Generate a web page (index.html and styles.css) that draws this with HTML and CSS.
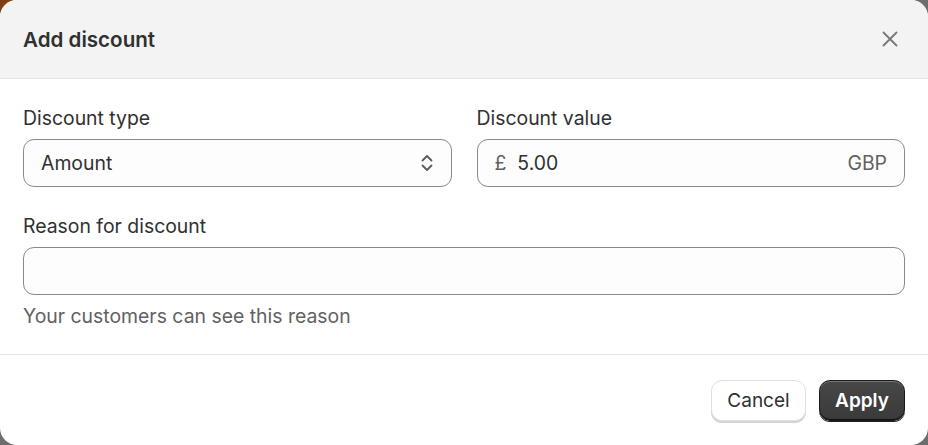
FILE: index.html
```html
<!DOCTYPE html>
<html lang="en">
<head>
<meta charset="utf-8">
<title>Add discount</title>
<link rel="stylesheet" href="styles.css">
</head>
<body>
<div class="modal">
  <div class="modal-header">
    <h2 class="modal-title">Add discount</h2>
    <button class="close-btn" aria-label="Close">
      <svg width="20" height="20" viewBox="0 0 20 20"><path d="M3.5 3.5 L16.5 16.5 M16.5 3.5 L3.5 16.5" stroke="#777" stroke-width="1.8" stroke-linecap="round" fill="none"/></svg>
    </button>
  </div>
  <div class="modal-body">
    <div class="row">
      <div class="field">
        <label class="label">Discount type</label>
        <div class="input select">
          <span class="value">Amount</span>
          <svg class="chev" width="16" height="24" viewBox="0 0 16 24"><path d="M3.5 9.5 L8 5 L12.5 9.5 M3.5 14.5 L8 19 L12.5 14.5" stroke="#5a5a5a" stroke-width="1.8" fill="none" stroke-linecap="round" stroke-linejoin="round"/></svg>
        </div>
      </div>
      <div class="field">
        <label class="label">Discount value</label>
        <div class="input">
          <span class="prefix">£</span>
          <span class="value grow">5.00</span>
          <span class="suffix">GBP</span>
        </div>
      </div>
    </div>
    <div class="field">
      <label class="label">Reason for discount</label>
      <div class="input"></div>
      <p class="help">Your customers can see this reason</p>
    </div>
  </div>
  <div class="modal-footer">
    <button class="btn btn-secondary">Cancel</button>
    <button class="btn btn-primary">Apply</button>
  </div>
</div>
</body>
</html>
```
FILE: styles.css
```css
* { box-sizing: border-box; }
html, body { margin: 0; height: 100%; }
body {
  background: linear-gradient(135deg, #7a3d12 0, #8a4a1c 2%, #6d6d6d 4%, #6d6d6d 100%);
  font-family: Inter, "Noto Sans", sans-serif;
  color: #303030;
}
.modal {
  width: 928px;
  height: 445px;
  background: #fff;
  border-radius: 17px;
  overflow: hidden;
  display: flex;
  flex-direction: column;
}
.modal-header {
  height: 79px;
  background: #f3f3f3;
  border-bottom: 1px solid #e3e3e3;
  display: flex;
  align-items: center;
  justify-content: space-between;
  padding: 0 23px 0 23px;
}
.modal-title {
  margin: 0;
  font-size: 20.6px;
  font-weight: 620;
  color: #303030;
}
.close-btn {
  border: 0;
  background: none;
  padding: 0;
  width: 22px;
  height: 22px;
  display: flex;
  align-items: center;
  justify-content: center;
  margin-right: 4px;
}
.modal-body {
  padding: 27px 23px 0 23px;
  height: 276px;
  border-bottom: 1px solid #e3e3e3;
  display: flex;
  flex-direction: column;
  gap: 27px;
}
.row {
  display: flex;
  gap: 25px;
}
.row .field { flex: 1; }
.field { display: flex; flex-direction: column; }
.label {
  font-size: 19.4px;
  line-height: 24px;
  margin-bottom: 9px;
  color: #303030;
}
.input {
  height: 48px;
  border: 1px solid #8a8a8a;
  border-radius: 11px;
  background: #fdfdfd;
  display: flex;
  align-items: center;
  padding: 0 17px;
  font-size: 19.4px;
  color: #303030;
}
.select { justify-content: space-between; padding-right: 16px; }
.prefix { color: #616161; margin-right: 11px; }
.grow { flex: 1; }
.suffix { color: #616161; }
.help {
  margin: 9px 0 0 0;
  font-size: 19.4px;
  line-height: 24px;
  color: #616161;
}
.modal-footer {
  flex: 1;
  display: flex;
  justify-content: flex-end;
  align-items: center;
  gap: 13px;
  padding: 0 23px 0 0;
}
.btn {
  font-family: inherit;
  font-size: 19px;
  height: 41px;
  border-radius: 11px;
  padding: 0;
  cursor: pointer;
}
.btn-secondary {
  background: #fff;
  border: 1px solid #e0e0e0;
  color: #303030;
  font-weight: 400;
  box-shadow: 0 2px 0 #d4d4d4;
  width: 95px;
}
.btn-primary {
  background: linear-gradient(#474747, #3a3a3a);
  border: 1px solid #1a1a1a;
  color: #fff;
  font-weight: 620;
  box-shadow: inset 0 1px 0 rgba(255,255,255,0.25), inset 0 -1px 0 #111, 0 1px 0 #222;
  width: 86px;
}
```
